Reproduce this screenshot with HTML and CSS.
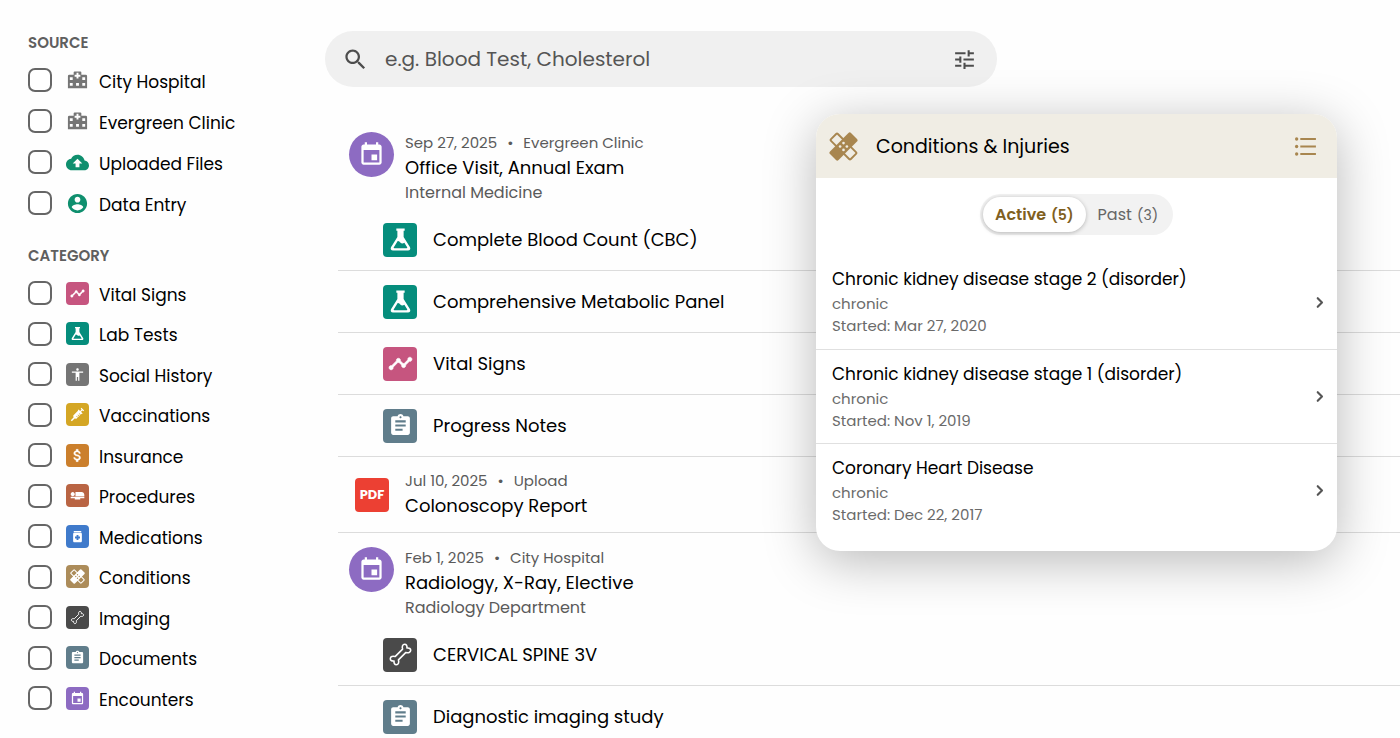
FILE: index.html
```html
<!DOCTYPE html>
<html lang="en">
<head>
  <meta charset="UTF-8" />
  <meta name="viewport" content="width=device-width, initial-scale=1.0" />
  <title>Health Records</title>
  <link rel="stylesheet" href="styles.css">
</head>
<body>
  <!-- Icon set -->
  <svg class="sprite" aria-hidden="true">
    <symbol id="i-search" viewBox="0 0 24 24"><path d="M15.5 14h-.79l-.28-.27C15.41 12.59 16 11.11 16 9.5 16 5.91 13.09 3 9.5 3S3 5.91 3 9.5 5.91 16 9.5 16c1.61 0 3.09-.59 4.23-1.57l.27.28v.79l5 4.99L20.49 19l-4.99-5zm-6 0C7.01 14 5 11.99 5 9.5S7.01 5 9.5 5 14 7.01 14 9.5 11.99 14 9.5 14z"/></symbol>
    <symbol id="i-tune" viewBox="0 0 24 24"><path d="M3 17v2h6v-2H3zM3 5v2h10V5H3zm10 16v-2h8v-2h-8v-2h-2v6h2zM7 9v2H3v2h4v2h2V9H7zm14 4v-2H11v2h10zm-6-4h2V7h4V5h-4V3h-2v6z"/></symbol>
    <symbol id="i-hospital" viewBox="0 0 24 24"><path fill-rule="evenodd" d="M9 2.500h6a1 1 0 0 1 1 1V6h4.500A1.500 1.500 0 0 1 22 7.500V20H2V7.500A1.500 1.500 0 0 1 3.500 6H8V3.500a1 1 0 0 1 1-1zM11 4v2H9v2h2v2h2V8h2V6h-2V4zM4 8.500v3h3v-3zM17 8.500v3h3v-3zM4 14.500v3h3v-3zM10.500 14.500v3h3v-3zM17 14.500v3h3v-3z"/></symbol>
    <symbol id="i-upload" viewBox="0 0 24 24"><path d="M19.350 10.040C18.670 6.590 15.640 4 12 4 9.110 4 6.600 5.640 5.350 8.040 2.340 8.360 0 10.910 0 14c0 3.310 2.690 6 6 6h13c2.760 0 5-2.240 5-5 0-2.640-2.050-4.780-4.650-4.960zM14 13v4h-4v-4H7l5-5 5 5h-3z"/></symbol>
    <symbol id="i-account" viewBox="0 0 24 24"><path d="M12 2C6.480 2 2 6.480 2 12s4.480 10 10 10 10-4.480 10-10S17.520 2 12 2zm0 3c1.660 0 3 1.340 3 3s-1.340 3-3 3-3-1.340-3-3 1.340-3 3-3zm0 14.200c-2.500 0-4.710-1.280-6-3.220.030-1.990 4-3.080 6-3.080 1.990 0 5.970 1.090 6 3.080-1.290 1.940-3.500 3.220-6 3.220z"/></symbol>
    <symbol id="i-vitals" viewBox="0 0 24 24"><path stroke="currentColor" stroke-width=".6" d="M23 8c0 1.100-.9 2-2 2-.18 0-.35-.02-.51-.07l-3.560 3.550c.05.16.07.34.07.52 0 1.100-.9 2-2 2s-2-.9-2-2c0-.18.02-.36.07-.52l-2.550-2.550c-.16.05-.34.07-.52.07s-.36-.02-.52-.07l-4.550 4.560c.05.16.07.33.07.51 0 1.100-.9 2-2 2s-2-.9-2-2 .9-2 2-2c.18 0 .35.02.51.07l4.560-4.550C8.020 9.360 8 9.180 8 9c0-1.100.9-2 2-2s2 .9 2 2c0 .18-.02.36-.07.52l2.550 2.550c.16-.05.34-.07.52-.07s.36.02.52.07l3.550-3.560C19.020 8.350 19 8.180 19 8c0-1.100.9-2 2-2s2 .9 2 2z"/></symbol>
    <symbol id="i-flask" viewBox="0 0 24 24"><path fill-rule="evenodd" d="M8 1.500h8v2h-1v6l6 9.600c1 1.700.1 3.400-1.800 3.400H4.800c-1.900 0-2.800-1.700-1.800-3.400l6-9.600v-6H8zM9.300 13.500L5.600 19.400c-.3.500-.1.900.5.900h11.800c.6 0 .8-.4.5-.9l-2.700-4.300c-1.700 1.200-3 .6-3.900-.3-.8-.9-1.600-1.300-2.500-1.300z"/></symbol>
    <symbol id="i-person" viewBox="0 0 24 24"><path d="M12 2c1.100 0 2 .9 2 2s-.9 2-2 2-2-.9-2-2 .9-2 2-2zm9 7h-6v13h-2v-6h-2v6H9V9H3V7h18v2z"/></symbol>
    <symbol id="i-syringe" viewBox="0 0 24 24"><g transform="rotate(45 12 12)"><path d="M9 0h6v1.800h-2V5h3.500v1.800H15.600V18l-2.400 1.800V26h-2.400v-6.200L8.400 18V6.800h-.9V5H11V1.800H9z"/><path class="cut" d="M12.500 8.500h3v1h-3zM12.500 11.500h3v1h-3zM12.500 14.500h3v1h-3z"/></g></symbol>
    <symbol id="i-dollar" viewBox="1 1 22 22"><path stroke="currentColor" stroke-width=".5" d="M11.800 10.900c-2.270-.59-3-1.200-3-2.150 0-1.090 1.010-1.850 2.700-1.850 1.780 0 2.440.85 2.500 2.100h2.210c-.07-1.720-1.120-3.300-3.210-3.810V3h-3v2.160c-1.940.42-3.500 1.680-3.500 3.610 0 2.310 1.910 3.460 4.700 4.130 2.500.6 3 1.480 3 2.410 0 .69-.49 1.790-2.700 1.790-2.060 0-2.870-.92-2.980-2.100h-2.200c.12 2.190 1.760 3.420 3.680 3.830V21h3v-2.150c1.950-.37 3.500-1.500 3.500-3.550 0-2.840-2.430-3.810-4.700-4.400z"/></symbol>
    <symbol id="i-bed" viewBox="1 1 22 22"><path d="M22 11v2H9V7h9c2.210 0 4 1.790 4 4zM2 14v2h6v2h8v-2h6v-2H2zm5.140-1.900c1.160-1.190 1.140-3.080-.04-4.240-1.190-1.160-3.080-1.140-4.240.04-1.160 1.190-1.140 3.080.04 4.240 1.190 1.160 3.080 1.140 4.240-.04z"/></symbol>
    <symbol id="i-pills" viewBox="0 0 24 24"><path d="M6 3h12v2H6zm11 3H7c-1.100 0-2 .9-2 2v11c0 1.100.9 2 2 2h10c1.100 0 2-.9 2-2V8c0-1.100-.9-2-2-2zm-1 9h-2.500v2.500h-3V15H8v-3h2.500V9.500h3V12H16v3z"/></symbol>
    <symbol id="i-bandage" viewBox="0 0 24 24"><rect x="0.400" y="8" width="23.200" height="8" rx="1" fill="none" stroke="currentColor" stroke-width="1.600" transform="rotate(45 12 12)"/><rect x="-0.300" y="7" width="24.600" height="10" rx="1.500" transform="rotate(-45 12 12)"/><g class="cut"><circle cx="12" cy="9.200" r="1.100"/><circle cx="9.200" cy="12" r="1.100"/><circle cx="14.800" cy="12" r="1.100"/><circle cx="12" cy="14.800" r="1.100"/></g></symbol>
    <symbol id="i-bone" viewBox="0 0 24 24"><path fill="none" stroke="currentColor" stroke-width="1.500" stroke-linejoin="round" d="M6.800 14L14 6.800C13.200 4.600 14 2.200 16 2.200c1.500 0 2.500 1.200 2.200 3.600 2.400-.3 3.600.7 3.600 2.200 0 2-2.400 2.800-4.600 2L10 17.200c.8 2.200 0 4.600-2 4.600-1.500 0-2.500-1.200-2.200-3.600-2.400.3-3.600-.7-3.600-2.200 0-2 2.400-2.800 4.600-2z"/></symbol>
    <symbol id="i-notes" viewBox="0 0 24 24"><path d="M19 3h-4.180C14.400 1.840 13.300 1 12 1c-1.300 0-2.400.84-2.820 2H5c-1.100 0-2 .9-2 2v14c0 1.100.9 2 2 2h14c1.100 0 2-.9 2-2V5c0-1.100-.9-2-2-2zm-7 0c.55 0 1 .45 1 1s-.45 1-1 1-1-.45-1-1 .45-1 1-1zm2 14H7v-2h7v2zm3-4H7v-2h10v2zm0-4H7V7h10v2z"/></symbol>
    <symbol id="i-event" viewBox="0 0 24 24"><path d="M17 12h-5v5h5v-5zM16 1v2H8V1H6v2H5c-1.110 0-1.990.9-1.990 2L3 19c0 1.100.89 2 2 2h14c1.100 0 2-.9 2-2V5c0-1.100-.9-2-2-2h-1V1h-2zm3 18H5V8h14v11z"/></symbol>
    <symbol id="i-list" viewBox="0 0 24 24"><path d="M7 3.800h15v2H7zM7 11h15v2H7zM7 18.200h15v2H7z"/><circle cx="3.500" cy="4.800" r="1.600"/><circle cx="3.500" cy="12" r="1.600"/><circle cx="3.500" cy="19.200" r="1.600"/></symbol>
    <symbol id="i-chevron" viewBox="0 0 24 24"><path fill="none" stroke="currentColor" stroke-width="3" stroke-linecap="round" stroke-linejoin="round" d="M9.500 6l6 6-6 6"/></symbol>
  </svg>

  <div class="app">
    <aside class="sidebar">
      <h2 class="filter-title">SOURCE</h2>
      <div class="filter-list">
        <label class="filter"><input type="checkbox"><svg class="glyph gray"><use href="#i-hospital"/></svg><span class="label">City Hospital</span></label>
        <label class="filter"><input type="checkbox"><svg class="glyph gray"><use href="#i-hospital"/></svg><span class="label">Evergreen Clinic</span></label>
        <label class="filter"><input type="checkbox"><svg class="glyph green"><use href="#i-upload"/></svg><span class="label">Uploaded Files</span></label>
        <label class="filter"><input type="checkbox"><svg class="glyph green"><use href="#i-account"/></svg><span class="label">Data Entry</span></label>
      </div>

      <h2 class="filter-title">CATEGORY</h2>
      <div class="filter-list categories">
        <label class="filter"><input type="checkbox"><span class="tile vitals"><svg><use href="#i-vitals"/></svg></span><span class="label">Vital Signs</span></label>
        <label class="filter"><input type="checkbox"><span class="tile labs"><svg><use href="#i-flask"/></svg></span><span class="label">Lab Tests</span></label>
        <label class="filter"><input type="checkbox"><span class="tile social"><svg><use href="#i-person"/></svg></span><span class="label">Social History</span></label>
        <label class="filter"><input type="checkbox"><span class="tile vaccines"><svg><use href="#i-syringe"/></svg></span><span class="label">Vaccinations</span></label>
        <label class="filter"><input type="checkbox"><span class="tile insurance"><svg><use href="#i-dollar"/></svg></span><span class="label">Insurance</span></label>
        <label class="filter"><input type="checkbox"><span class="tile procedures"><svg><use href="#i-bed"/></svg></span><span class="label">Procedures</span></label>
        <label class="filter"><input type="checkbox"><span class="tile meds"><svg><use href="#i-pills"/></svg></span><span class="label">Medications</span></label>
        <label class="filter"><input type="checkbox"><span class="tile conditions"><svg><use href="#i-bandage"/></svg></span><span class="label">Conditions</span></label>
        <label class="filter"><input type="checkbox"><span class="tile imaging"><svg><use href="#i-bone"/></svg></span><span class="label">Imaging</span></label>
        <label class="filter"><input type="checkbox"><span class="tile docs"><svg><use href="#i-notes"/></svg></span><span class="label">Documents</span></label>
        <label class="filter"><input type="checkbox"><span class="tile visits"><svg><use href="#i-event"/></svg></span><span class="label">Encounters</span></label>
      </div>
    </aside>

    <main class="content">
      <form class="search" role="search">
        <svg class="search-icon"><use href="#i-search"/></svg>
        <input type="search" aria-label="Search records" placeholder="e.g. Blood Test, Cholesterol">
        <button type="button" class="icon-btn" aria-label="Filters"><svg><use href="#i-tune"/></svg></button>
      </form>

      <div class="timeline">
        <div class="entry">
          <span class="badge visits"><svg><use href="#i-event"/></svg></span>
          <div class="entry-text">
            <div class="meta"><span>Sep 27, 2025</span><span>•</span><span>Evergreen Clinic</span></div>
            <div class="name">Office Visit, Annual Exam</div>
            <div class="dept">Internal Medicine</div>
          </div>
        </div>
        <div class="record"><span class="tile labs"><svg><use href="#i-flask"/></svg></span>Complete Blood Count (CBC)</div>
        <div class="record"><span class="tile labs"><svg><use href="#i-flask"/></svg></span>Comprehensive Metabolic Panel</div>
        <div class="record"><span class="tile vitals"><svg><use href="#i-vitals"/></svg></span>Vital Signs</div>
        <div class="record"><span class="tile docs"><svg><use href="#i-notes"/></svg></span>Progress Notes</div>

        <div class="entry upload">
          <span class="pdf">PDF</span>
          <div class="entry-text">
            <div class="meta"><span>Jul 10, 2025</span><span>•</span><span>Upload</span></div>
            <div class="name">Colonoscopy Report</div>
          </div>
        </div>

        <div class="entry">
          <span class="badge visits"><svg><use href="#i-event"/></svg></span>
          <div class="entry-text">
            <div class="meta"><span>Feb 1, 2025</span><span>•</span><span>City Hospital</span></div>
            <div class="name">Radiology, X-Ray, Elective</div>
            <div class="dept">Radiology Department</div>
          </div>
        </div>
        <div class="record"><span class="tile imaging"><svg><use href="#i-bone"/></svg></span>CERVICAL SPINE 3V</div>
        <div class="record"><span class="tile docs"><svg><use href="#i-notes"/></svg></span>Diagnostic imaging study</div>
      </div>
    </main>

    <section class="panel">
      <header class="panel-head">
        <svg class="panel-icon"><use href="#i-bandage"/></svg>
        <h1>Conditions &amp; Injuries</h1>
        <button type="button" class="icon-btn" aria-label="List view"><svg><use href="#i-list"/></svg></button>
      </header>
      <div class="tabs">
        <button type="button" class="tab active">Active <span>(5)</span></button>
        <button type="button" class="tab">Past <span>(3)</span></button>
      </div>
      <a class="condition" href="#">
        <div class="condition-text">
          <div class="condition-name">Chronic kidney disease stage 2 (disorder)</div>
          <div class="condition-info">chronic</div>
          <div class="condition-info">Started: Mar 27, 2020</div>
        </div>
        <svg><use href="#i-chevron"/></svg>
      </a>
      <a class="condition" href="#">
        <div class="condition-text">
          <div class="condition-name">Chronic kidney disease stage 1 (disorder)</div>
          <div class="condition-info">chronic</div>
          <div class="condition-info">Started: Nov 1, 2019</div>
        </div>
        <svg><use href="#i-chevron"/></svg>
      </a>
      <a class="condition" href="#">
        <div class="condition-text">
          <div class="condition-name">Coronary Heart Disease</div>
          <div class="condition-info">chronic</div>
          <div class="condition-info">Started: Dec 22, 2017</div>
        </div>
        <svg><use href="#i-chevron"/></svg>
      </a>
    </section>
  </div>
</body>
</html>
```
FILE: styles.css
```css
* {
  box-sizing: border-box;
}

body {
  margin: 0;
  font-family: Poppins, Inter, sans-serif;
  font-size: 18px;
  color: #000;
  background: #fefefe;
}

svg {
  fill: currentColor;
  flex-shrink: 0;
}

.sprite {
  display: none;
}

.cut {
  fill: var(--cut);
}

button {
  font: inherit;
  color: inherit;
  background: none;
  border: none;
  padding: 0;
  cursor: pointer;
}

.app {
  position: relative;
  display: flex;
  height: 100vh;
  overflow: hidden;
}

/* Sidebar filters */
.sidebar {
  flex: 0 0 325px;
  display: flex;
  flex-direction: column;
  padding: 32px 28px 28px;
}

.filter-title {
  margin: 0 0 15px;
  font-size: 15px;
  line-height: 21px;
  font-weight: 600;
  color: #5f5f5f;
}

.filter-list {
  display: flex;
  flex-direction: column;
  gap: 17px;
  margin-bottom: 30px;
}

.categories {
  flex: 1;
  gap: 0;
  justify-content: space-between;
  margin-bottom: 0;
}

.filter {
  display: flex;
  align-items: center;
  height: 24px;
  font-size: 17px;
}

.label {
  padding-top: 3px;
}

.filter input {
  appearance: none;
  width: 24px;
  height: 24px;
  margin: 0 14px 0 0;
  border: 2px solid #666;
  border-radius: 7px;
  background: #fff;
}

.filter input:checked {
  background: #666;
}

.glyph {
  width: 23px;
  height: 23px;
  margin-right: 10px;
}

.gray {
  color: #757575;
}

.green {
  color: #0f8f6e;
}

/* Coloured icon tiles */
.tile {
  display: flex;
  align-items: center;
  justify-content: center;
  flex-shrink: 0;
  width: 23px;
  height: 23px;
  margin-right: 10px;
  border-radius: 4px;
  color: #fff;
}

.tile svg {
  width: 15px;
  height: 15px;
}

.vitals { background: #c6557f; }
.labs { background: #058d7c; }
.social { background: #757575; }
.vaccines { background: #d4a624; --cut: #d4a624; }
.insurance { background: #cb7f2c; }
.procedures { background: #b96443; }
.meds { background: #3f7acb; }
.conditions { background: #ac8c5a; --cut: #ac8c5a; }
.imaging { background: #4a4a4a; }
.docs { background: #607d8b; }
.visits { background: #8d6bc2; }

/* Search */
.content {
  flex: 1;
  min-width: 0;
  padding-top: 31px;
}

.search {
  display: flex;
  align-items: center;
  max-width: 672px;
  height: 56px;
  margin-bottom: 31px;
  padding: 0 20px 0 17px;
  border-radius: 28px;
  background: #f0f0f0;
  color: #4d4d4d;
}

.search-icon,
.icon-btn svg {
  display: block;
  width: 25px;
  height: 25px;
}

.search-icon {
  width: 27px;
  height: 27px;
}

.search input {
  flex: 1;
  min-width: 0;
  margin-left: 16px;
  padding: 0;
  border: none;
  outline: none;
  background: none;
  font-family: inherit;
  font-size: 20px;
  color: #000;
}

.search input::placeholder {
  color: #555;
}

/* Timeline */
.timeline {
  margin-left: 13px;
}

.entry {
  display: flex;
  padding: 12px 0 4px 11px;
}

.badge {
  display: flex;
  align-items: center;
  justify-content: center;
  width: 45px;
  height: 45px;
  margin: 2px 11px 0 0;
  border-radius: 50%;
  color: #fff;
}

.badge svg {
  width: 27px;
  height: 27px;
}

.entry-text {
  line-height: 25px;
}

.meta {
  display: flex;
  gap: 10px;
  font-size: 15px;
  color: #5a5a5a;
}

.dept {
  font-size: 16px;
  color: #5a5a5a;
}

.record {
  display: flex;
  align-items: center;
  height: 62px;
  padding-left: 45px;
  border-bottom: 1px solid #dcdcdc;
}

.record .tile {
  width: 34px;
  height: 34px;
  margin-right: 16px;
}

.record .tile svg {
  width: 25px;
  height: 25px;
}

.upload {
  align-items: center;
  height: 76px;
  padding: 0 0 0 17px;
  border-bottom: 1px solid #dcdcdc;
}

.upload .entry-text {
  padding-bottom: 4px;
}

.pdf {
  width: 34px;
  margin-right: 16px;
  border-radius: 4px;
  background: #ec4033;
  color: #fff;
  font-size: 13px;
  font-weight: 700;
  line-height: 34px;
  text-align: center;
}

/* Conditions card */
.panel {
  position: absolute;
  top: 114px;
  right: 63px;
  width: 521px;
  padding-bottom: 14px;
  border-radius: 24px;
  background: #fff;
  box-shadow: 0 10px 52px rgba(0, 0, 0, 0.28);
  overflow: hidden;
}

.panel-head {
  display: flex;
  align-items: center;
  height: 64px;
  padding: 0 19px 0 13px;
  background: #f0ede4;
  color: #a8864f;
  --cut: #f0ede4;
}

.panel-icon {
  width: 29px;
  height: 29px;
}

.panel h1 {
  flex: 1;
  margin: 0 0 0 18px;
  font-size: 19px;
  font-weight: 400;
  color: #000;
}

.tabs {
  display: flex;
  width: fit-content;
  margin: 16px auto 20px;
  padding: 3px;
  border-radius: 21px;
  background: #f2f2f2;
}

.tab {
  height: 35px;
  padding: 0 12px;
  border-radius: 18px;
  font-size: 16px;
  color: #666;
}

.tab span {
  margin-left: 1px;
  font-size: 14px;
}

.tab.active {
  background: #fff;
  color: #80601f;
  font-weight: 600;
  box-shadow: 0 1px 4px rgba(0, 0, 0, 0.25);
}

.condition {
  display: flex;
  align-items: center;
  justify-content: space-between;
  height: 94px;
  padding: 0 9px 0 16px;
  color: #000;
  text-decoration: none;
}

.condition + .condition {
  border-top: 1px solid #e0e0e0;
}

.condition svg {
  width: 17px;
  height: 17px;
  color: #555;
}

.condition-text {
  padding-bottom: 2px;
}

.condition-name {
  font-size: 17px;
  line-height: 28px;
}

.condition-info {
  font-size: 15px;
  line-height: 22px;
  color: #6a6a6a;
}
```
